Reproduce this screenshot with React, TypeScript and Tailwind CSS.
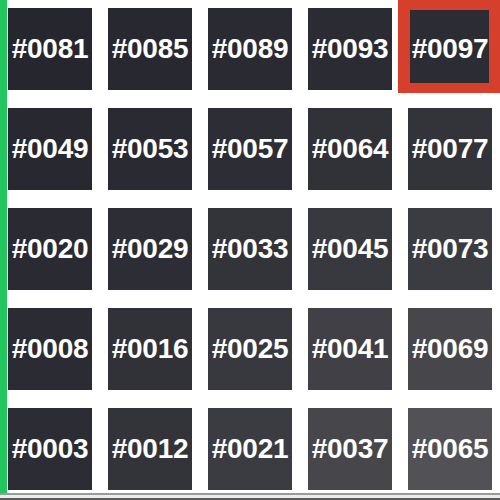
import React from 'react';

// tile ids, top row first
const rows = [
  ['0081', '0085', '0089', '0093', '0097'],
  ['0049', '0053', '0057', '0064', '0077'],
  ['0020', '0029', '0033', '0045', '0073'],
  ['0008', '0016', '0025', '0041', '0069'],
  ['0003', '0012', '0021', '0037', '0065'],
];

// tiles get lighter toward the bottom-right corner
function tileColor(r: number, c: number) {
  const cx = 50 + c * 100;
  const cy = 49 + r * 100;
  const d = Math.sqrt((500 - cx) ** 2 + (500 - cy) ** 2) / 707;
  const t = Math.max(0, 1 - d) ** 2;
  const mix = (a: number, b: number) => Math.round(a + (b - a) * t);
  return `rgb(${mix(37, 92)}, ${mix(38, 91)}, ${mix(46, 95)})`;
}

export default function App() {
  return (
    <div className="w-[500px] h-[500px] overflow-hidden bg-white flex flex-col" style={{ fontFamily: '"Liberation Sans", Arial, sans-serif' }}>
      <div className="flex flex-1 min-h-0">
        <div className="w-[7px] shrink-0 bg-[#22c55e]" />
        <div className="grid grid-cols-[repeat(5,84px)] auto-rows-[82px] gap-x-4 gap-y-[18px] pl-px pt-2">
          {rows.map((row, r) =>
            row.map((id, c) => {
              const selected = r === 0 && c === 4;
              return (
                <div
                  key={id}
                  className="relative flex items-center justify-center"
                  style={{ backgroundColor: tileColor(r, c) }}
                >
                  {selected && (
                    <div className="absolute -left-[10px] -top-[11px] -right-[9px] -bottom-[3px] border-l-[12px] border-r-[12px] border-t-[13px] border-b-[10px] border-[#d63f2c]" />
                  )}
                  <span className="relative text-white font-bold text-[28px] leading-none tracking-[-0.3px] whitespace-nowrap">
                    #{id}
                  </span>
                </div>
              );
            })
          )}
        </div>
      </div>
      <div className="h-[7px] shrink-0 border-t-2 border-[#9a9a9a] bg-[#ececec] border-b-2 border-b-[#5a5a5a]" />
    </div>
  );
}
